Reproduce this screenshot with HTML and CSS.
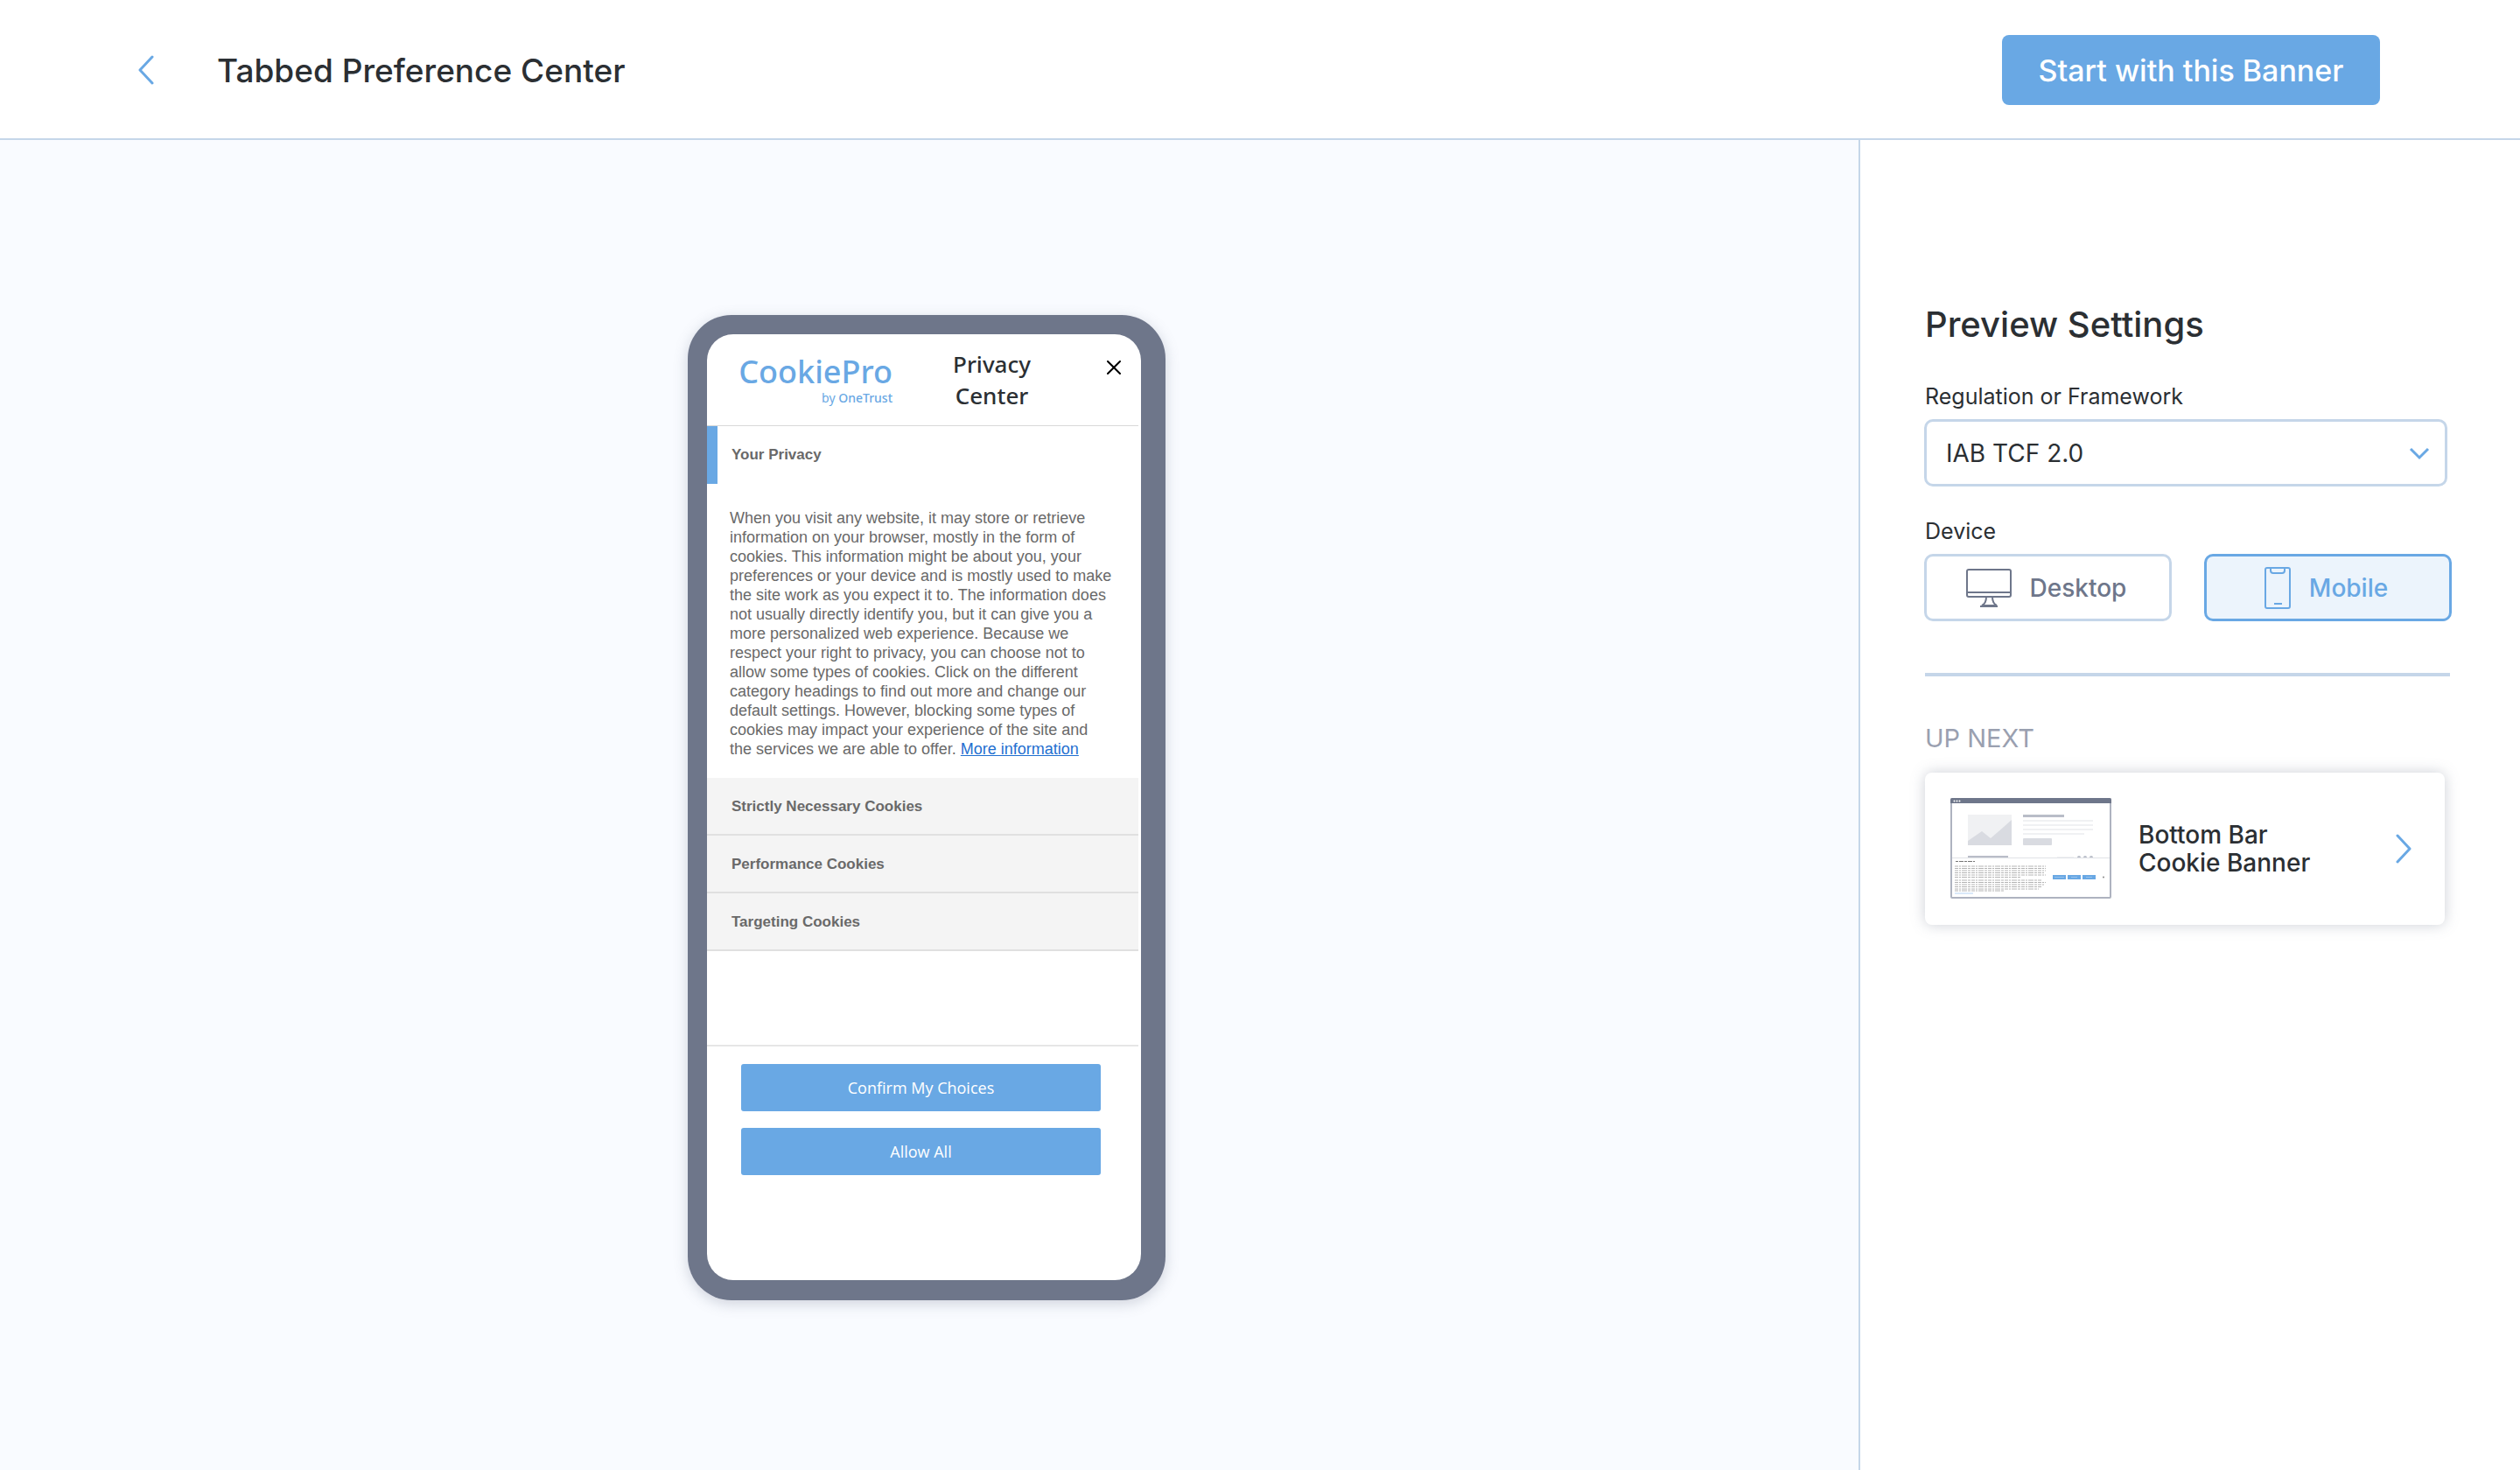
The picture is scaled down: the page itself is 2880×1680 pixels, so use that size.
FILE: index.html
```
<!DOCTYPE html>
<html lang="en">
<head>
<meta charset="utf-8">
<meta name="viewport" content="width=device-width, initial-scale=1">
<title>Tabbed Preference Center</title>
<link rel="stylesheet" href="styles.css">
</head>
<body>
<div class="page">
  <header class="topbar">
    <a class="back" href="#" aria-label="Back">
      <svg width="18" height="34" viewBox="0 0 18 34" fill="none" stroke="currentColor" stroke-width="3" stroke-linecap="round" stroke-linejoin="round"><path d="M16 2 2 17l14 15"/></svg>
    </a>
    <h1 class="title">Tabbed Preference Center</h1>
    <button class="start" type="button">Start with this Banner</button>
  </header>

  <div class="body">
    <main class="stage">
      <section class="phone" aria-label="Mobile preview">
        <div class="screen">
          <div class="panel">
            <div class="panel-head">
              <div class="logo">
                <span class="logo-name">CookiePro</span>
                <span class="logo-by">by <b>OneTrust</b></span>
              </div>
              <h2 class="panel-title">Privacy Center</h2>
              <button class="close" type="button" aria-label="Close">
                <svg width="18" height="18" viewBox="0 0 18 18" fill="none" stroke="currentColor" stroke-width="2" stroke-linecap="round"><path d="M2 2l14 14M16 2 2 16"/></svg>
              </button>
            </div>
            <button class="tab tab-active" type="button">Your Privacy</button>
            <p class="copy">When you visit any website, it may store or retrieve information on your browser, mostly in the form of cookies. This information might be about you, your preferences or your device and is mostly used to make the site work as you expect it to. The information does not usually directly identify you, but it can give you a more personalized web experience. Because we respect your right to privacy, you can choose not to allow some types of cookies. Click on the different category headings to find out more and change our default settings. However, blocking some types of cookies may impact your experience of the site and<br>the services we are able to offer. <a class="more" href="#">More information</a></p>
            <button class="tab" type="button">Strictly Necessary Cookies</button>
            <button class="tab" type="button">Performance Cookies</button>
            <button class="tab" type="button">Targeting Cookies</button>
            <div class="actions">
              <button class="action" type="button">Confirm My Choices</button>
              <button class="action" type="button">Allow All</button>
            </div>
          </div>
        </div>
      </section>
    </main>

    <aside class="sidebar">
      <h2 class="side-title">Preview Settings</h2>
      <label class="label" for="framework">Regulation or Framework</label>
      <div class="select-wrap">
        <select class="select" id="framework"><option>IAB TCF 2.0</option></select>
        <svg class="caret" width="24" height="16" viewBox="0 0 24 16" fill="none" stroke="currentColor" stroke-width="3"><path d="M2 3l10 10L22 3"/></svg>
      </div>
      <div class="label" id="device-label">Device</div>
      <div class="devices" role="group" aria-labelledby="device-label">
        <button class="device" type="button" aria-pressed="false">
          <svg width="52" height="44" viewBox="0 0 52 44" fill="none" stroke="currentColor" stroke-width="2"><rect x="1" y="1" width="50" height="31" rx="2"/><path d="M1 27h50M23 32c0 5-1 8-5 10h17c-4-2-5-5-5-10M16 43h20"/></svg>
          Desktop
        </button>
        <button class="device device-on" type="button" aria-pressed="true">
          <svg width="30" height="48" viewBox="0 0 30 48" fill="none" stroke="currentColor" stroke-width="2"><rect x="1" y="1" width="28" height="46" rx="2"/><path d="M7 1v3q0 3 3 3h10q3 0 3-3V1M11 42h9"/></svg>
          Mobile
        </button>
      </div>
      <hr class="rule">
      <h3 class="next-title">UP NEXT</h3>
      <a class="card" href="#">
        <svg class="thumb" width="184" height="116" viewBox="0 0 184 116" aria-hidden="true">
          <rect x="1" y="1" width="182" height="113" rx="1" fill="#fff" stroke="#aeb3c0" stroke-width="2"/>
          <path d="M0 6V2q0-2 2-2h180q2 0 2 2v4z" fill="#6e768a"/>
          <g fill="#fff"><circle cx="4.500" cy="3.500" r="1"/><circle cx="7.500" cy="3.500" r="1"/><circle cx="10.500" cy="3.500" r="1"/></g>
          <rect x="20" y="19" width="50" height="35" fill="#f0f1f3"/>
          <path d="M20 49l16-11 10 8 24-21v29H20z" fill="#d9dbe1"/>
          <rect x="83" y="19" width="47" height="3" fill="#b9bdc8"/>
          <path d="M83 26h80M83 31h80M83 36h80M83 41h70" stroke="#f0f1f3" stroke-width="2"/>
          <rect x="83" y="46" width="33" height="8" rx="1" fill="#d9dbe1"/>
          <rect x="20" y="66" width="46" height="3" fill="#b9bdc8"/>
          <rect x="122" y="67" width="19" height="2" fill="#f0f1f3"/>
          <g fill="#b9bdc8"><circle cx="147" cy="68" r="2"/><circle cx="154" cy="68" r="2"/><circle cx="161" cy="68" r="2"/></g>
          <path d="M2 68.500h180" stroke="#e0e2e7"/>
          <rect x="2" y="69" width="180" height="44" fill="#fff"/>
          <path d="M6 72.500h22" stroke="#777" stroke-dasharray="3 1 5 1"/>
          <path d="M5 78h104M5 80.500h104M5 83h104M5 85.500h103M5 88h104M5 90.500h75M5 94h100M5 96.500h104M5 99h103M5 101.500h100M5 104h96M5 106h56" stroke="#b4b4b4" stroke-dasharray="4 1 2 1 6 1 3 1"/>
          <path d="M5 109h21" stroke="#b3d3f2"/>
          <path d="M117 90.500h15M134 90.500h15M151 90.500h15" stroke="#69a8e4" stroke-width="5"/>
          <path d="M119 90.500h11M138 90.500h7M155 90.500h7" stroke="#97c2ec"/>
          <circle cx="175" cy="90.500" r="1" fill="#888"/>
        </svg>
        <span class="card-text">Bottom Bar<br>Cookie Banner</span>
        <svg class="card-arrow" width="18" height="34" viewBox="0 0 18 34" fill="none" stroke="currentColor" stroke-width="3" stroke-linecap="round" stroke-linejoin="round"><path d="M2 2l14 15L2 32"/></svg>
      </a>
    </aside>
  </div>
</div>
</body>
</html>
```
FILE: styles.css
```
* { box-sizing: border-box; }

:root {
  --blue: #69a8e4;
  --line: #c5d6e9;
  --ink: #2b2f33;
  --slate: #6e768a;
}

body {
  margin: 0;
  font-family: Inter, sans-serif;
  color: var(--ink);
  background: #fff;
}

h1, h2, h3, p { margin: 0; }

button {
  border: 0;
  padding: 0;
  font: inherit;
  cursor: pointer;
}

.page {
  display: flex;
  flex-direction: column;
  min-height: 100vh;
}

.topbar {
  display: flex;
  align-items: center;
  height: 160px;
  padding: 2px 160px 0 158px;
  border-bottom: 2px solid var(--line);
}

.back {
  display: flex;
  color: var(--blue);
}

.title {
  flex: 1;
  padding: 2px 0 0 72px;
  font-size: 37px;
  font-weight: 500;
  line-height: 48px;
}

.start {
  width: 432px;
  height: 80px;
  border-radius: 8px;
  background: var(--blue);
  color: #fff;
  font-size: 34px;
  font-weight: 500;
}

.body {
  flex: 1;
  display: grid;
  grid-template-columns: 1fr 756px;
}

.stage {
  display: flex;
  justify-content: center;
  align-items: flex-start;
  padding: 200px 6px 80px 0;
  background: #f9fbff;
}

.phone {
  width: 546px;
  padding: 22px 28px 23px 22px;
  border-radius: 50px;
  background: var(--slate);
  box-shadow: 0 4px 16px rgba(110, 118, 138, 0.3);
}

.screen {
  min-height: 1081px;
  padding-right: 3px;
  border-radius: 30px;
  overflow: hidden;
  background: #fff;
}

.panel-head {
  display: grid;
  grid-template-columns: 176px 1fr 60px;
  align-items: start;
  height: 105px;
  padding: 16px 0 0 36px;
  border-bottom: 1px solid #d8d8d8;
}

.logo {
  display: flex;
  flex-direction: column;
  align-items: flex-end;
  padding-top: 4px;
  font-family: "Noto Sans", sans-serif;
  color: var(--blue);
}

.logo-name {
  font-size: 36px;
  font-weight: 500;
  line-height: 46px;
}

.logo-by {
  font-size: 14px;
  line-height: 14px;
}

.logo-by b { font-weight: 500; }

.panel-title {
  width: 100px;
  margin-left: 6px;
  justify-self: center;
  font-family: "Noto Sans", sans-serif;
  font-size: 26px;
  font-weight: 500;
  line-height: 36px;
  text-align: center;
}

.close {
  display: flex;
  padding: 13px 0 0 23px;
  background: none;
  color: #000;
}

.tab {
  display: block;
  width: 100%;
  height: 66px;
  padding: 2px 0 0 28px;
  border-bottom: 2px solid #e0e0e0;
  background: #f4f4f4;
  font-family: "Liberation Sans", Arial, sans-serif;
  font-size: 17px;
  font-weight: 700;
  text-align: left;
  color: #696969;
}

.tab-active {
  padding: 0 0 0 16px;
  border-bottom: 0;
  border-left: 12px solid var(--blue);
  background: #fff;
}

.copy {
  padding: 28px 26px 22px;
  font-family: "Liberation Sans", Arial, sans-serif;
  font-size: 18px;
  line-height: 22px;
  color: #696969;
}

.more { color: #1f6fd0; }

.actions {
  display: flex;
  flex-direction: column;
  gap: 19px;
  margin-top: 107px;
  padding: 20px 43px 0 39px;
  border-top: 2px solid #e6e6e6;
}

.action {
  height: 54px;
  border-radius: 3px;
  background: var(--blue);
  color: #fff;
  font-family: "Open Sans", sans-serif;
  font-size: 18px;
}

.sidebar {
  display: flex;
  flex-direction: column;
  padding: 185px 80px 80px 74px;
  border-left: 2px solid var(--line);
}

.side-title {
  font-size: 40px;
  font-weight: 500;
  line-height: 52px;
}

.label {
  margin-top: 38px;
  font-size: 25px;
  line-height: 36px;
}

.select-wrap {
  display: grid;
  align-items: center;
  margin: 8px 3px 0 -1px;
}

.select,
.caret { grid-area: 1 / 1; }

.select {
  appearance: none;
  height: 77px;
  padding: 0 22px;
  border: 3px solid var(--line);
  border-radius: 10px;
  background: #fff;
  font: inherit;
  font-size: 28px;
  color: inherit;
}

.caret {
  justify-self: end;
  margin-right: 20px;
  color: var(--blue);
  pointer-events: none;
}

.select-wrap + .label { margin-top: 33px; }

.devices {
  display: grid;
  grid-template-columns: 1fr 1fr;
  gap: 37px;
  margin: 8px -2px 0 -1px;
}

.device {
  display: flex;
  justify-content: center;
  align-items: center;
  gap: 21px;
  height: 77px;
  padding-right: 4px;
  border: 3px solid var(--line);
  border-radius: 10px;
  background: #fff;
  color: var(--slate);
  font-size: 28px;
  font-weight: 500;
}

.device-on {
  border-color: var(--blue);
  background: #ecf4fc;
  color: var(--blue);
}

.rule {
  width: 100%;
  height: 4px;
  margin: 59px 0 0;
  border: 0;
  background: var(--line);
}

.next-title {
  margin-top: 53px;
  font-size: 29px;
  font-weight: 400;
  line-height: 36px;
  color: #9aa0b0;
}

.card {
  display: flex;
  align-items: center;
  height: 174px;
  margin: 21px 6px 0 0;
  padding: 0 38px 0 29px;
  border-radius: 8px;
  background: #fff;
  box-shadow: 0 0 16px rgba(110, 118, 138, 0.35);
  color: inherit;
  text-decoration: none;
}

.card-text {
  flex: 1;
  padding-left: 31px;
  font-size: 28px;
  font-weight: 500;
  line-height: 32px;
}

.card-arrow { color: var(--blue); }
```
